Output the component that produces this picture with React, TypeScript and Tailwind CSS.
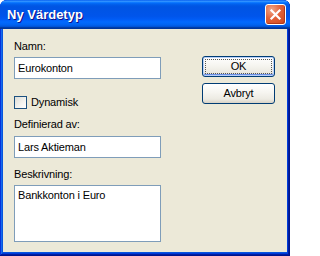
import React from 'react';

function CloseButton() {
  return (
    <button
      aria-label="Stäng"
      className="flex h-[21px] w-[21px] items-center justify-center rounded-[3px] border border-white bg-[radial-gradient(circle_at_30%_25%,#F0A688_0%,#E2623A_45%,#CC4419_100%)] shadow-[inset_-1px_-1px_#B0381A]"
    >
      <svg width="13" height="13" viewBox="0 0 13 13">
        <path d="M2.5 2.5 L10.5 10.5 M10.5 2.5 L2.5 10.5" stroke="#fff" strokeWidth="2.2" strokeLinecap="square" />
      </svg>
    </button>
  );
}

function XpButton({ label, primary }: { label: string; primary?: boolean }) {
  return (
    <button
      className={
        'flex h-[21px] w-[73px] items-center justify-center rounded-[3px] border border-[#003C74] bg-[linear-gradient(180deg,#FFFFFF_0%,#F6F5F0_45%,#ECEAE2_80%,#D8D2C6_100%)] text-[11px] leading-[13px] text-black ' +
        (primary
          ? 'shadow-[inset_0_0_0_1px_#B8CFF8,inset_0_-1px_0_1px_#6B8FE6] outline-1 outline-offset-[-4px] outline-dotted outline-[#555]'
          : '')
      }
    >
      {label}
    </button>
  );
}

function TextField({ value }: { value: string }) {
  return (
    <div className="flex h-[22px] w-full items-center border border-[#7F9DB9] bg-white pl-[3px] text-[11px] leading-[13px] text-black">
      {value}
    </div>
  );
}

export default function App() {
  return (
    <div className="h-[256px] w-[290px] bg-white font-['Liberation_Sans',Arial,sans-serif] tracking-[-0.15px]">
      <div className="flex h-full flex-col overflow-hidden rounded-t-[7px] bg-[#0855DD] shadow-[inset_-1px_-1px_#00138c,inset_1px_1px_#0831d9,inset_-2px_-2px_#001ea0,inset_2px_2px_#166aee,inset_-3px_-3px_#003bda]">
        {/* title bar */}
        <div className="flex h-[29px] shrink-0 items-center justify-between bg-[linear-gradient(180deg,#0058ee_0%,#3593ff_4%,#288eff_6%,#127dff_8%,#036ffc_10%,#0262ee_14%,#0057e5_20%,#0054e3_24%,#0055eb_56%,#005bf5_66%,#026afe_76%,#0062ef_86%,#0052d6_92%,#0040ab_94%,#003092_100%)] pl-[7px] pr-[4px]">
          <span className="text-[13px] font-bold leading-[16px] tracking-normal text-white [text-shadow:1px_1px_#0F1089]">
            Ny Värdetyp
          </span>
          <CloseButton />
        </div>

        {/* dialog body */}
        <div className="mx-[3px] mb-[4px] flex flex-1 justify-between bg-[#ECE9D8] pl-[11px] pr-[12px] pt-[11px]">
          <div className="flex w-[147px] flex-col text-[11px] leading-[13px] text-black">
            <label>Namn:</label>
            <div className="mt-[4px]">
              <TextField value="Eurokonton" />
            </div>

            <div className="mt-[17px] flex items-center">
              <span className="h-[13px] w-[13px] border border-[#1C5180] bg-[linear-gradient(135deg,#DCDCD7_0%,#F4F4F0_60%,#FFFFFF_100%)]" />
              <span className="ml-[4px]">Dynamisk</span>
            </div>

            <label className="mt-[9px]">Definierad av:</label>
            <div className="mt-[5px]">
              <TextField value="Lars Aktieman" />
            </div>

            <label className="mt-[10px]">Beskrivning:</label>
            <div className="mt-[4px] h-[57px] w-full border border-[#7F9DB9] bg-white pl-[3px] pt-[3px]">
              Bankkonton i Euro
            </div>
          </div>

          <div className="flex w-[73px] flex-col gap-[6px] pt-[16px]">
            <XpButton label="OK" primary />
            <XpButton label="Avbryt" />
          </div>
        </div>
      </div>
    </div>
  );
}
